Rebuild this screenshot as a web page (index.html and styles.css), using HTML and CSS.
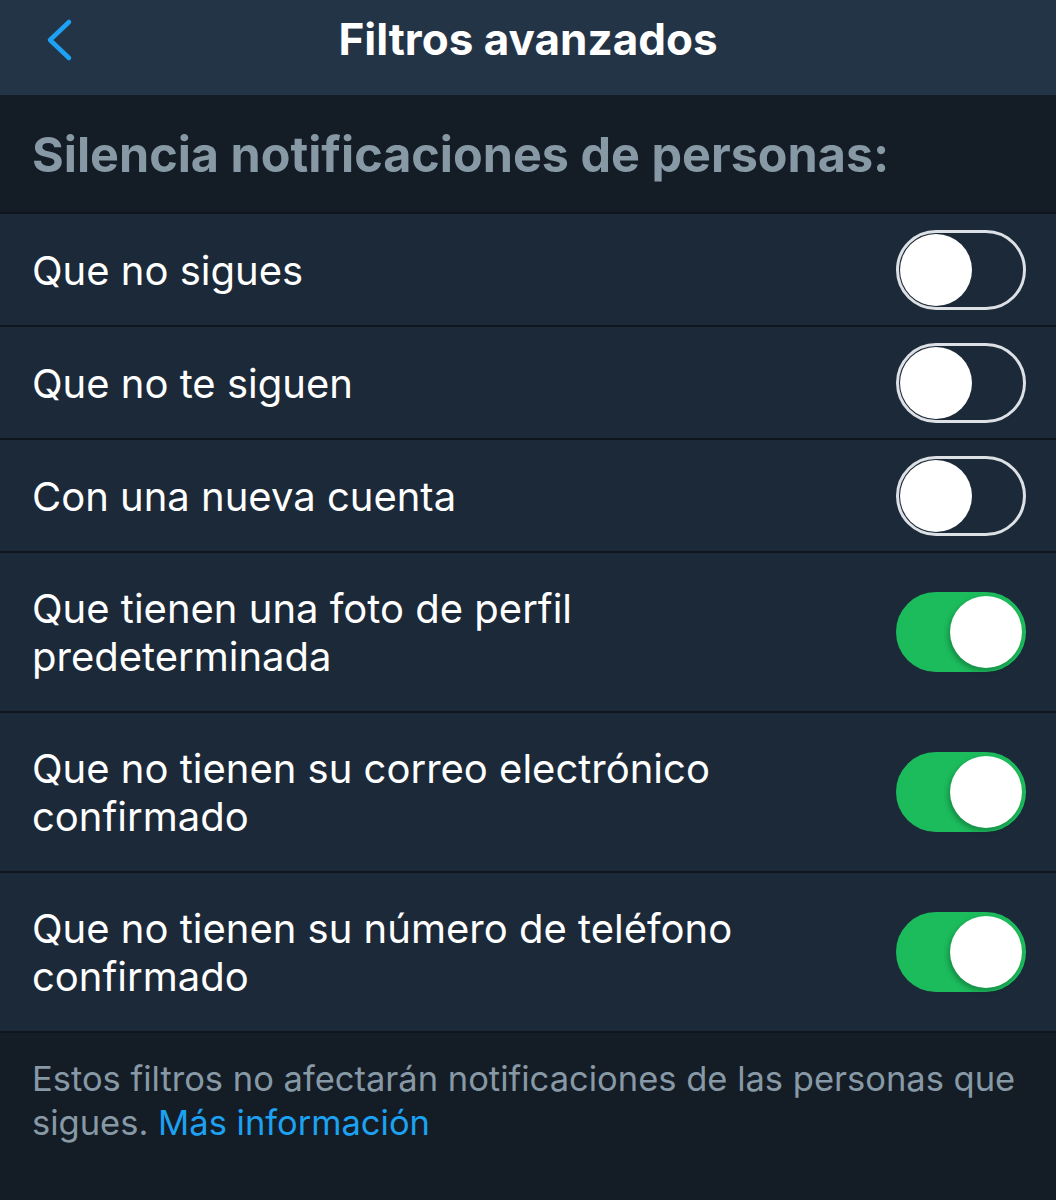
FILE: index.html
```html
<!DOCTYPE html>
<html lang="es">
<head>
<meta charset="utf-8">
<link rel="stylesheet" href="styles.css">
</head>
<body>
<div class="app">
  <header class="nav">
    <svg class="back" viewBox="0 0 30 44" width="30" height="44"><path d="M25 4 L6 22 L25 40" fill="none" stroke="#1da1f2" stroke-width="4.5" stroke-linecap="round" stroke-linejoin="round"/></svg>
    <h1 class="title">Filtros avanzados</h1>
  </header>
  <div class="section-head">Silencia notificaciones de personas:</div>
  <ul class="list">
    <li class="row"><span class="label">Que no sigues</span><span class="switch"><span class="knob"></span></span></li>
    <li class="row"><span class="label">Que no te siguen</span><span class="switch"><span class="knob"></span></span></li>
    <li class="row"><span class="label">Con una nueva cuenta</span><span class="switch"><span class="knob"></span></span></li>
    <li class="row tall"><span class="label">Que tienen una foto de perfil<br>predeterminada</span><span class="switch on"><span class="knob"></span></span></li>
    <li class="row tall"><span class="label">Que no tienen su correo electrónico<br>confirmado</span><span class="switch on"><span class="knob"></span></span></li>
    <li class="row tall"><span class="label">Que no tienen su número de teléfono<br>confirmado</span><span class="switch on"><span class="knob"></span></span></li>
  </ul>
  <p class="footer">Estos filtros no afectarán notificaciones de las personas que sigues. <a class="link">Más información</a></p>
</div>
</body>
</html>
```
FILE: styles.css
```css
html, body {
  margin: 0;
  padding: 0;
  background: #141d26;
}
body {
  font-family: Inter, Roboto, "Liberation Sans", sans-serif;
  -webkit-font-smoothing: antialiased;
}
.app {
  width: 1056px;
  min-height: 1200px;
  background: #141d26;
}
.nav {
  position: relative;
  height: 95px;
  background: #243447;
  display: flex;
  align-items: center;
  justify-content: center;
}
.back {
  position: absolute;
  left: 44px;
  top: 18px;
}
.title {
  margin: 0 0 17px 0;
  color: #fff;
  font-size: 44px;
  line-height: 52px;
  font-weight: 700;
}
.section-head {
  height: 119px;
  box-sizing: border-box;
  padding: 2px 32px 0 32px;
  display: flex;
  align-items: center;
  color: #8899a6;
  font-size: 48.5px;
  font-weight: 700;
  border-bottom: 2px solid #0f151c;
}
.list {
  list-style: none;
  margin: 0;
  padding: 0;
}
.row {
  height: 111px;
  background: #1c2938;
  border-bottom: 2px solid #0f151c;
  display: flex;
  align-items: center;
  justify-content: space-between;
  padding: 0 30px 0 32px;
}
.row.tall {
  height: 158px;
}
.label {
  color: #fff;
  font-size: 40px;
  line-height: 48px;
  padding-top: 2px;
}
.switch {
  position: relative;
  width: 130px;
  height: 80px;
  box-sizing: border-box;
  border-radius: 40px;
  border: 3px solid #dde1e5;
  background: #1c2938;
  flex: none;
}
.switch .knob {
  position: absolute;
  top: 1px;
  left: 1px;
  width: 72px;
  height: 72px;
  border-radius: 50%;
  background: #fff;
}
.switch.on {
  background: #1cbb5c;
  border-color: #1cbb5c;
}
.switch.on .knob {
  left: auto;
  right: 1px;
  box-shadow: -2px 3px 5px rgba(0,0,0,0.25);
}
.footer {
  margin: 0;
  padding: 24px 30px 0 32px;
  color: #8899a6;
  font-size: 34.5px;
  line-height: 44px;
}
.link {
  color: #1da1f2;
}
```
